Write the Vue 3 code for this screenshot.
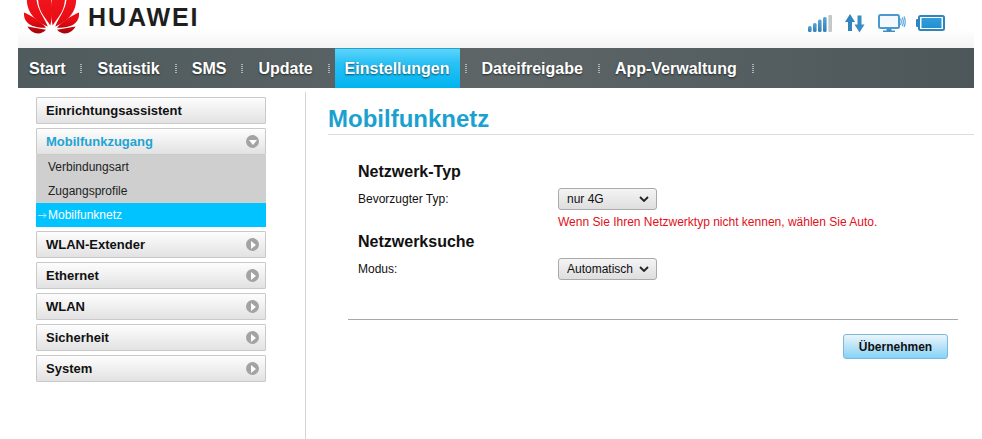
<script setup>
import { ref } from 'vue'

const navItems = ['Start', 'Statistik', 'SMS', 'Update', 'Einstellungen', 'Dateifreigabe', 'App-Verwaltung']
const subItems = ['Verbindungsart', 'Zugangsprofile', 'Mobilfunknetz']
const lowerMenu = ['WLAN-Extender', 'Ethernet', 'WLAN', 'Sicherheit', 'System']
const netType = ref('nur 4G')
const mode = ref('Automatisch')
const petals = [
  'M50.300 25.500 C46 18 37.500 12 38 -4 L50.500 -4 C52.500 6 52.500 16 50.300 25.500 Z',
  'M47.800 26.500 C37 22 25.500 13 27 -3 L36.500 -3 C36 8 44 17 47.800 26.500 Z',
  'M46 27.800 C36 28 23 25.500 24 12.500 C30 15 41 21 46 27.800 Z',
  'M46 29.800 L27.500 26.500 C31 33 39.500 36.500 46 29.800 Z'
]
</script>

<template>
  <div class="page">
    <header class="header">
      <div class="brand">
        <svg class="logo" width="56" height="35" viewBox="23 0 56 35" aria-hidden="true">
          <defs>
            <linearGradient id="petal" gradientUnits="userSpaceOnUse" x1="0" y1="0" x2="0" y2="34">
              <stop offset="0" stop-color="#f2141c" />
              <stop offset="0.6" stop-color="#e80d14" />
              <stop offset="1" stop-color="#a00208" />
            </linearGradient>
          </defs>
          <g fill="url(#petal)">
            <path v-for="d in petals" :key="d" :d="d" />
            <g transform="translate(103 0) scale(-1 1)">
              <path v-for="d in petals" :key="d" :d="d" />
            </g>
          </g>
        </svg>
        <span class="wordmark">HUAWEI</span>
      </div>
      <div class="status">
        <svg width="24" height="19" viewBox="0 0 24 19" aria-hidden="true">
          <defs>
            <linearGradient id="bar" x1="0" y1="0" x2="0" y2="1">
              <stop offset="0" stop-color="#5aa6d6" />
              <stop offset="1" stop-color="#2f7fb4" />
            </linearGradient>
          </defs>
          <rect x="0" y="12" width="3.600" height="6" rx="1.500" fill="url(#bar)" />
          <rect x="5" y="9" width="3.600" height="9" rx="1.500" fill="url(#bar)" />
          <rect x="10" y="5.500" width="3.600" height="12.500" rx="1.500" fill="url(#bar)" />
          <rect x="15" y="3" width="3.600" height="15" rx="1.500" fill="url(#bar)" />
          <rect x="20.400" y="1" width="3.600" height="17" rx="1" fill="#c3c8ca" />
        </svg>
        <svg width="20" height="19" viewBox="0 0 20 19" aria-hidden="true">
          <path d="M5 0 L10 8 H7 V17 H3 V8 H0 Z" fill="#2f86bf" />
          <path d="M14.500 18.500 L19.500 10.500 H16.500 V1.500 H12.500 V10.500 H9.500 Z" fill="#3a8cc4" />
        </svg>
        <svg width="28" height="19" viewBox="0 0 28 19" aria-hidden="true">
          <rect x="1" y="1" width="20" height="13" rx="1.500" fill="#f3f9fd" stroke="#4a9ad0" stroke-width="2" />
          <path d="M8.500 15h5v1.500h3.500V18H5v-1.500h3.500z" fill="#3f8fc4" />
          <path d="M22.500 4.500q1.500 3 0 6.500M24.300 3.500q2 4.500 0 8.500M26 2.500q2.500 5.500 0 10.500" fill="none" stroke="#5ba6d8" stroke-width="1.200" />
        </svg>
        <svg class="battery" width="29" height="16" viewBox="0 0 29 16" aria-hidden="true">
          <defs>
            <linearGradient id="charge" x1="0" y1="0" x2="0" y2="1">
              <stop offset="0" stop-color="#2f9edb" />
              <stop offset="1" stop-color="#2490d0" />
            </linearGradient>
          </defs>
          <rect x="0" y="4" width="3" height="8" rx="1" fill="#2f86bf" />
          <rect x="3" y="1" width="25" height="14" rx="1.500" fill="#fff" stroke="#2f86bf" stroke-width="2" />
          <rect x="5.500" y="3" width="20" height="10" fill="url(#charge)" />
        </svg>
      </div>
    </header>

    <nav class="nav">
      <template v-for="item in navItems" :key="item">
        <a class="nav-item" :class="{ active: item === 'Einstellungen' }">{{ item }}</a>
        <i class="nav-sep"></i>
      </template>
    </nav>

    <div class="body">
      <aside class="sidebar">
        <div class="menu-head plain">Einrichtungsassistent</div>
        <div class="group">
          <div class="menu-head open">
            <span>Mobilfunkzugang</span>
            <span class="bullet"><i class="tri down"></i></span>
          </div>
          <ul class="sub">
            <li v-for="s in subItems" :key="s" :class="{ current: s === 'Mobilfunknetz' }">
              <svg v-if="s === 'Mobilfunknetz'" class="arrow" width="9" height="7" viewBox="0 0 9 7" aria-hidden="true">
                <path d="M0 3.500H8M5.500 1L8 3.500L5.500 6" fill="none" stroke="#d5f3ff" stroke-width="0.800" />
              </svg>{{ s }}
            </li>
          </ul>
        </div>
        <div v-for="m in lowerMenu" :key="m" class="menu-head">
          <span>{{ m }}</span>
          <span class="bullet"><i class="tri right"></i></span>
        </div>
      </aside>

      <main class="content">
        <h1 class="title">Mobilfunknetz</h1>
        <section class="form">
          <h2 class="sec first">Netzwerk-Typ</h2>
          <div class="row">
            <label class="lbl">Bevorzugter Typ:</label>
            <select v-model="netType" class="sel">
              <option>nur 4G</option>
              <option>Auto</option>
            </select>
          </div>
          <p class="note">Wenn Sie Ihren Netzwerktyp nicht kennen, wählen Sie Auto.</p>
          <h2 class="sec">Netzwerksuche</h2>
          <div class="row">
            <label class="lbl">Modus:</label>
            <select v-model="mode" class="sel">
              <option>Automatisch</option>
              <option>Manuell</option>
            </select>
          </div>
        </section>
        <div class="actions">
          <button class="apply" type="button">Übernehmen</button>
        </div>
      </main>
    </div>
  </div>
</template>

<style>
html, body { margin: 0; background: #fff; }
</style>

<style scoped>
.page {
  width: 956px;
  margin-left: 18px;
  height: 439px;
  overflow: hidden;
  font-family: "Liberation Sans", Arial, sans-serif;
  color: #000;
}
.header {
  height: 48px;
  box-sizing: border-box;
  display: flex;
  justify-content: space-between;
  background: linear-gradient(#fff 0, #fff 30px, #f3f3f3 48px);
  padding-left: 5px;
  padding-right: 29px;
}
.brand { display: flex; align-items: flex-start; }
.logo { display: block; }
.wordmark {
  margin-left: 9px;
  margin-top: 4px;
  font-size: 25px;
  line-height: 27px;
  font-weight: 700;
  color: #1e1e1e;
  letter-spacing: 1.900px;
}
.status { display: flex; align-items: flex-start; padding-top: 14px; gap: 13px; }
.battery { margin-left: -3px; margin-top: 1px; }
.nav {
  height: 40px;
  display: flex;
  align-items: stretch;
  padding-left: 1px;
  background: linear-gradient(90deg, #4f5b5d 0, #5d6567 50%, #4d5759 100%);
}
.nav-item {
  display: flex;
  align-items: center;
  padding: 2px 10px 0;
  font-size: 16px;
  font-weight: 700;
  color: #fff;
  text-shadow: 0 1px 2px rgba(0, 0, 0, .6);
}
.nav-item.active {
  background: linear-gradient(#5cd5fb 0, #2bc1f5 35%, #00b4f0 100%);
  border-top: 1px solid #2a9fc8;
  box-sizing: border-box;
  padding-top: 1px;
}
.nav-sep {
  width: 2px;
  margin: 0 5px;
  align-self: center;
  height: 9px;
  background: repeating-linear-gradient(#c5caca 0 1px, transparent 1px 2px);
  opacity: .8;
}
.body { display: flex; align-items: stretch; height: 351px; }
.sidebar {
  width: 230px;
  margin: 9px 39px 0 18px;
  display: flex;
  flex-direction: column;
  gap: 4px;
}
.menu-head {
  height: 27px;
  box-sizing: border-box;
  border: 1px solid #c9c9c9;
  border-radius: 1px;
  padding: 0 6px 0 9px;
  display: flex;
  align-items: center;
  justify-content: space-between;
  font-size: 13px;
  font-weight: 700;
  color: #111;
  background: linear-gradient(#fdfdfd, #e2e2e2);
}
.menu-head.open { color: #1ea4d3; }
.bullet {
  width: 13px;
  height: 13px;
  border-radius: 50%;
  background: #a3a3a3;
  display: flex;
  align-items: center;
  justify-content: center;
}
.tri { display: block; width: 0; height: 0; }
.tri.right { border-left: 5px solid #fff; border-top: 4px solid transparent; border-bottom: 4px solid transparent; margin-left: 2px; }
.tri.down { border-top: 5px solid #fff; border-left: 4px solid transparent; border-right: 4px solid transparent; margin-top: 2px; }
.sub { list-style: none; margin: 0; padding: 0; background: #cfcfcf; }
.sub li {
  height: 24px;
  line-height: 24px;
  padding-left: 12px;
  font-size: 12px;
  color: #222;
}
.sub li.current { background: #00c3ff; color: #fff; padding-left: 2px; }
.arrow { margin-right: 1px; }
.content {
  flex: 1;
  min-width: 0;
  border-left: 1px solid #d3d3d3;
  margin-top: 4px;
  padding-left: 22px;
}
.title {
  margin: 13px 0 0;
  padding-bottom: 1px;
  font-size: 24px;
  line-height: 28px;
  font-weight: 700;
  color: #1ba1cf;
  border-bottom: 1px solid #dcdcdc;
}
.form { padding: 0 0 0 30px; }
.sec { margin: 0; font-size: 16px; line-height: 20px; font-weight: 700; color: #111; }
.sec.first { margin-top: 27px; }
.row { display: flex; align-items: center; margin-top: 6px; height: 22px; }
.lbl { width: 200px; font-size: 12px; color: #111; }
.sel {
  appearance: none;
  width: 99px;
  height: 22px;
  box-sizing: border-box;
  font-family: "Liberation Sans", Arial, sans-serif;
  font-size: 12px;
  color: #111;
  border: 1px solid #aaa;
  border-radius: 3px;
  padding: 0 0 0 8px;
  background:
    url("data:image/svg+xml,%3Csvg xmlns='http://www.w3.org/2000/svg' width='10' height='6'%3E%3Cpath d='M1 1l4 4 4-4' fill='none' stroke='%23222' stroke-width='1.800'/%3E%3C/svg%3E") no-repeat right 7px center,
    linear-gradient(#f4f4f4, #dedede);
}
.note { margin: 5px 0 0 200px; font-size: 12px; line-height: 14px; color: #e0101a; }
.note + .sec { margin-top: 3px; }
.actions {
  margin: 39px 16px 0 20px;
  border-top: 1px solid #a8a8a8;
  display: flex;
  justify-content: flex-end;
  padding: 14px 10px 0 0;
}
.apply {
  width: 105px;
  height: 25px;
  box-sizing: border-box;
  border: 1px solid #7bb8dc;
  border-radius: 3px;
  font-family: "Liberation Sans", Arial, sans-serif;
  font-size: 12px;
  font-weight: 700;
  color: #111;
  background: linear-gradient(#e9f5fc 0, #bfe4f8 45%, #84d4f8 100%);
  padding: 0;
}
</style>
